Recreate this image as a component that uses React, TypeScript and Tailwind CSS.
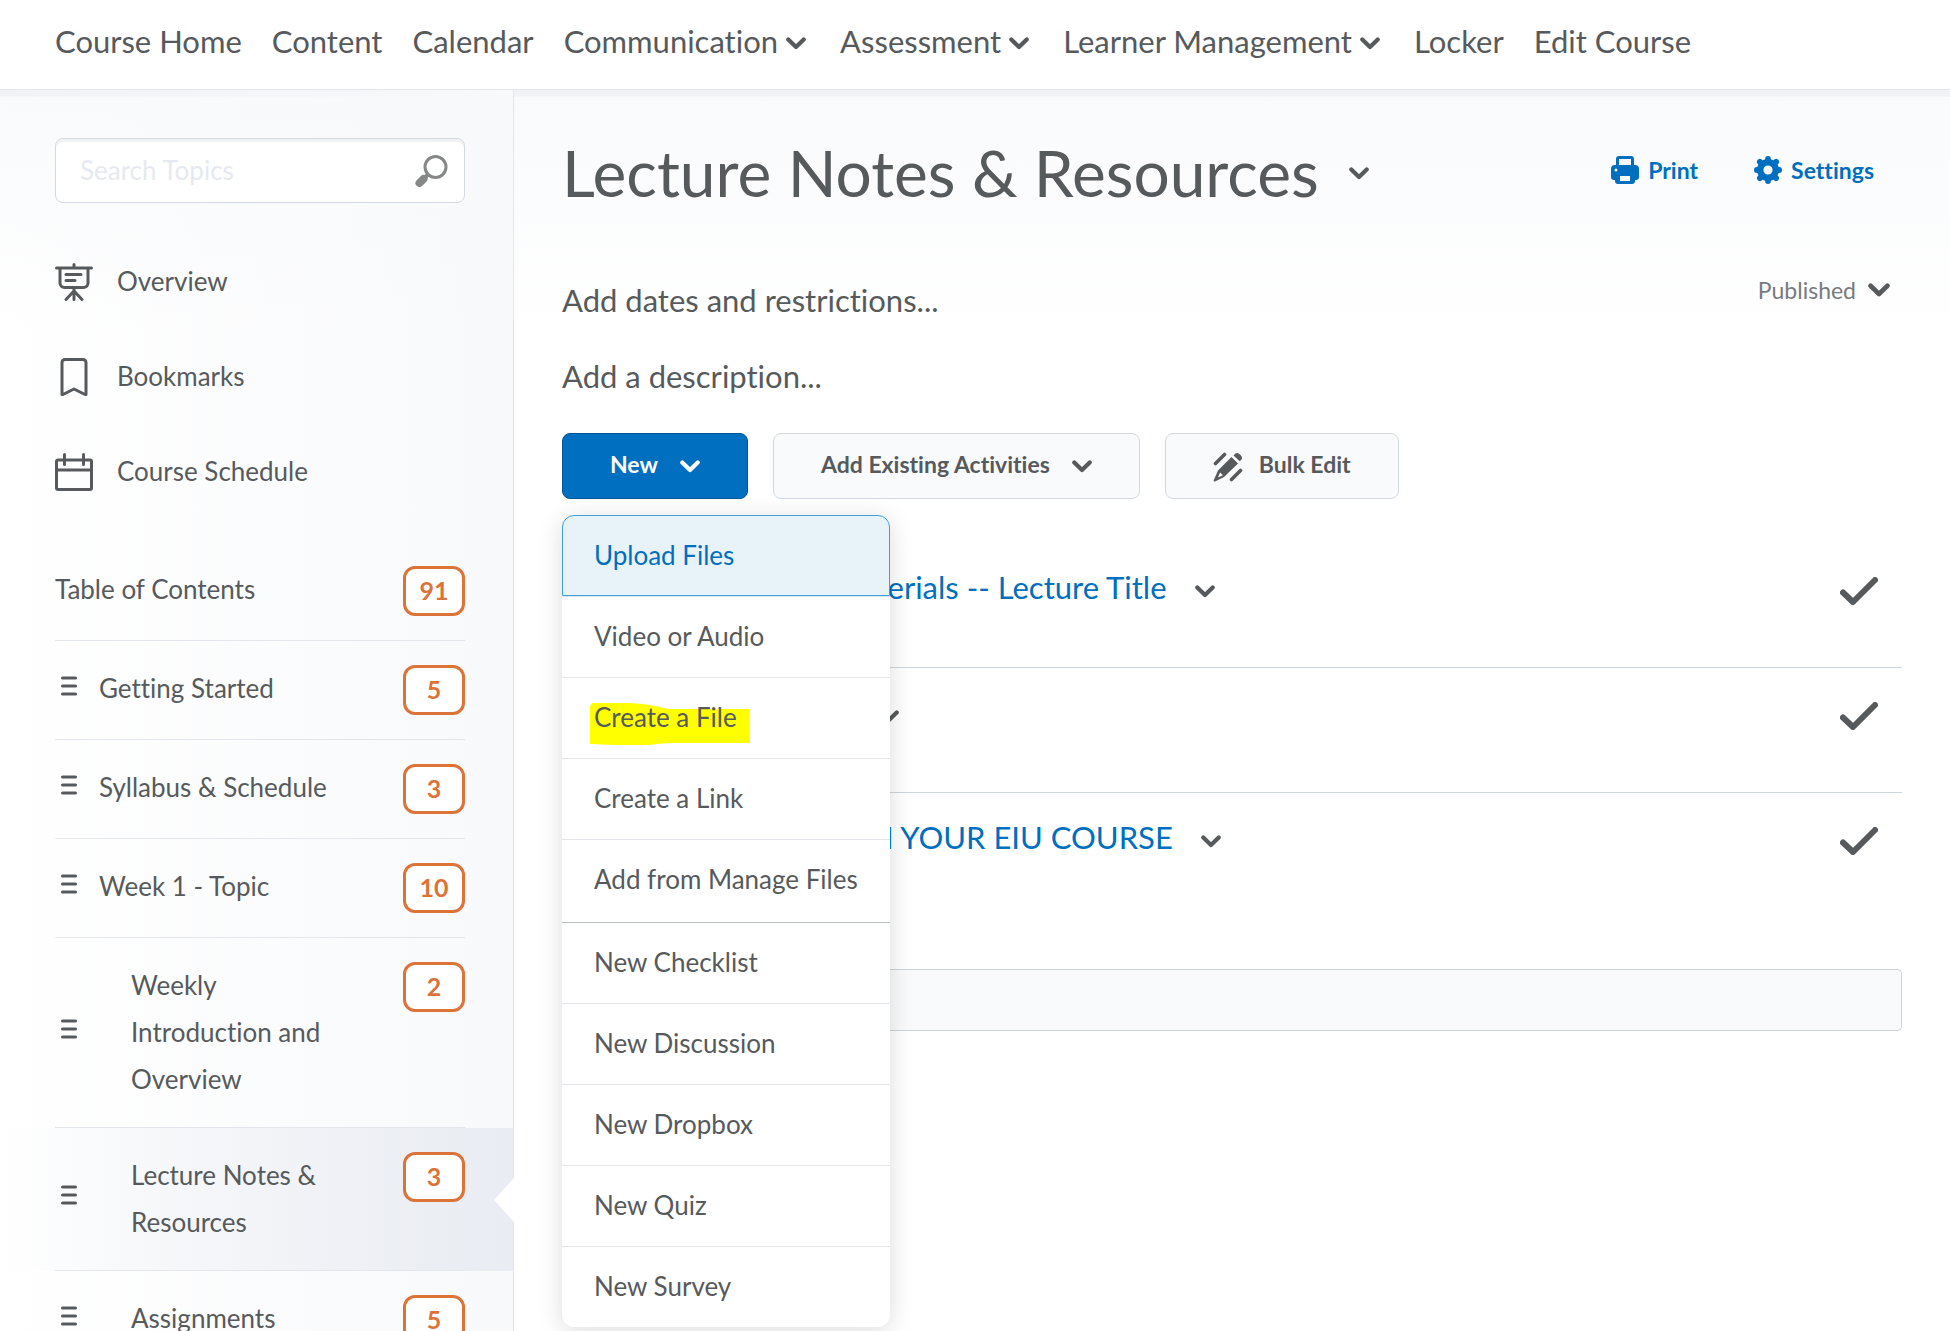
import React from 'react';

type IconProps = { className?: string };

const navItems = [
  { label: 'Course Home' },
  { label: 'Content' },
  { label: 'Calendar' },
  { label: 'Communication', menu: true },
  { label: 'Assessment', menu: true },
  { label: 'Learner Management', menu: true },
  { label: 'Locker' },
  { label: 'Edit Course' },
];

const modules = [
  { title: 'Getting Started', count: 5 },
  { title: 'Syllabus & Schedule', count: 3 },
  { title: 'Week 1 - Topic', count: 10 },
  { title: 'Weekly Introduction and Overview', count: 2, nested: true },
  { title: 'Lecture Notes & Resources', count: 3, nested: true, active: true },
  { title: 'Assignments', count: 5, nested: true },
];

const menuGroups = [
  ['Upload Files', 'Video or Audio', 'Create a File', 'Create a Link', 'Add from Manage Files'],
  ['New Checklist', 'New Discussion', 'New Dropbox', 'New Quiz', 'New Survey'],
];

const topics = [
  'Multimedia Lecture Materials -- Lecture Title',
  'Lecture Notes Packet',
  'TOPICS RESOURCES IN YOUR EIU COURSE',
];

const Chevron: React.FC<IconProps> = ({ className = 'w-5' }) => (
  <svg viewBox="0 0 20 13" className={`${className} shrink-0`} fill="none" stroke="currentColor" strokeWidth="4.2" strokeLinecap="round" strokeLinejoin="round" aria-hidden="true">
    <path d="M2.300 2.500l7.700 7.500 7.700-7.500" />
  </svg>
);

const OverviewIcon = () => (
  <svg viewBox="0 0 38 38" className="h-[38px] w-[38px]" fill="none" stroke="currentColor" strokeWidth="3" strokeLinecap="round" strokeLinejoin="round" aria-hidden="true">
    <path d="M1.500 5h35M19 1.500V5M5 5v15a4.500 4.500 0 0 0 4.500 4.500h19A4.500 4.500 0 0 0 33 20V5M11 11.500h15M11 17.500h9M19 24.500v12M19 28l-8 8.500M19 28l8 8.500" />
  </svg>
);

const BookmarkIcon = () => (
  <svg viewBox="0 0 38 38" className="h-[38px] w-[38px]" fill="none" stroke="currentColor" strokeWidth="3" strokeLinecap="round" strokeLinejoin="round" aria-hidden="true">
    <path d="M10 1.500h18a3 3 0 0 1 3 3V36.500h-1L19 31 8 36.500H7V4.500a3 3 0 0 1 3-3z" />
  </svg>
);

const CalendarIcon = () => (
  <svg viewBox="0 0 38 38" className="h-[38px] w-[38px]" fill="none" stroke="currentColor" strokeWidth="3" strokeLinecap="round" strokeLinejoin="round" aria-hidden="true">
    <rect x="1.500" y="7" width="35" height="29.500" rx="1.500" />
    <path d="M1.500 17h35M9.500 1.500v10M28.500 1.500v10" />
  </svg>
);

const SearchIcon = () => (
  <svg viewBox="0 0 34 34" className="h-[34px] w-[34px]" fill="none" stroke="currentColor" strokeLinecap="round" aria-hidden="true">
    <circle cx="21.500" cy="13" r="10.500" strokeWidth="3" />
    <path d="M9.500 25l-4 4" strokeWidth="8" />
    <path d="M13.500 21l-3 3" strokeWidth="4" />
  </svg>
);

const GripIcon = () => (
  <svg viewBox="0 0 16 20" className="h-5 w-4" stroke="currentColor" strokeWidth="3" strokeLinecap="round" aria-hidden="true">
    <path d="M1.500 2h13M1.500 10h13M1.500 18h13" />
  </svg>
);

const PrintIcon = () => (
  <svg viewBox="0 0 28 28" className="h-7 w-7" fill="currentColor" aria-hidden="true">
    <path fillRule="evenodd" d="M8 0h12a3 3 0 0 1 3 3v6h1a4 4 0 0 1 4 4v8a3 3 0 0 1-3 3h-1v1a3 3 0 0 1-3 3H7a3 3 0 0 1-3-3v-1H3a3 3 0 0 1-3-3v-8a4 4 0 0 1 4-4h1V3a3 3 0 0 1 3-3zm0 3v6h12V3zm1 17v5h10v-5zM5 12.500a1.500 1.500 0 1 0 0 3 1.500 1.500 0 0 0 0-3z" />
  </svg>
);

const GearIcon = () => (
  <svg viewBox="0 0 28 28" className="h-7 w-7" fill="none" stroke="currentColor" aria-hidden="true">
    <circle cx="14" cy="14" r="7.800" strokeWidth="6.400" />
    <g strokeWidth="5.800" strokeLinecap="round">
      <path d="M14 2.900v2M14 23.100v2M2.900 14h2M23.100 14h2M5.900 5.900l1.400 1.400M20.700 20.700l1.400 1.400M22.100 5.900l-1.400 1.400M7.300 20.700l-1.400 1.400" />
    </g>
  </svg>
);

const BulkEditIcon = () => (
  <svg viewBox="0 0 30 30" className="h-[30px] w-[30px]" fill="currentColor" aria-hidden="true">
    <path d="M21.500 2.500a3 3 0 0 1 3-1.500c2 .5 4 2.500 4.500 4.500a3 3 0 0 1-1.500 3l-1 .5-6-5.500z" />
    <path fillRule="evenodd" d="M18.500 5l6.500 6.500L11 25 2 29.500a1 1 0 0 1-1.300-1.300L5 18.500zM7 20.500l-2 5 5-2.200z" />
    <path d="M2.500 11.500l9-9M18.500 27.500l9-9" stroke="currentColor" strokeWidth="3.600" strokeLinecap="round" />
  </svg>
);

const CheckIcon = () => (
  <svg viewBox="0 0 38 28" className="h-7 w-[38px]" fill="none" stroke="currentColor" strokeWidth="6" strokeLinecap="round" strokeLinejoin="round" aria-hidden="true">
    <path d="M3 15.500l10 9.500L35 3" />
  </svg>
);

const CountBadge = ({ count }: { count: number }) => (
  <span className="flex h-[50px] w-[62px] shrink-0 items-center justify-center rounded-xl border-3 border-[#dc7339] bg-white pb-[2px] text-[25px] leading-none font-bold text-[#dc7339]">
    {count}
  </span>
);

const Header = () => (
  <header className="border-b border-[#e3e5ea] bg-white">
    <nav className="flex h-[89px] items-center gap-[30px] px-[55px] pb-2 text-[31px] leading-10">
      {navItems.map((item) =>
        item.menu ? (
          <button key={item.label} className="flex items-center gap-2 pr-1 whitespace-nowrap">
            {item.label}
            <Chevron className="mt-1.5 w-5" />
          </button>
        ) : (
          <a key={item.label} href="#" className="whitespace-nowrap">
            {item.label}
          </a>
        )
      )}
    </nav>
  </header>
);

const Sidebar = () => (
  <aside className="w-[514px] shrink-0 border-r border-[#e3e6ea] bg-linear-to-r from-transparent to-[#f8f9fb] pt-12 text-[26px] leading-[47px]">
    <div className="mr-12 ml-[55px] flex h-[65px] items-center rounded-lg border border-[#d3d9e3] bg-white pr-4 pl-6 shadow-[inset_0_3px_0_#f1f2f4]">
      <input
        type="text"
        aria-label="Search Topics"
        placeholder="Search Topics"
        className="min-w-0 flex-1 bg-transparent outline-none placeholder:text-[#e6eaf0]"
      />
      <button aria-label="Search" className="text-[#868888]">
        <SearchIcon />
      </button>
    </div>

    <nav className="mt-[31px] ml-[55px]">
      <a href="#" className="flex h-[95px] items-center gap-6">
        <OverviewIcon />
        Overview
      </a>
      <a href="#" className="flex h-[95px] items-center gap-6">
        <BookmarkIcon />
        Bookmarks
      </a>
      <a href="#" className="flex h-[95px] items-center gap-6">
        <CalendarIcon />
        Course Schedule
      </a>
    </nav>

    <a href="#" className="mt-[23px] mr-12 ml-[55px] flex items-start justify-between border-b border-[#e3e6ea] py-6">
      Table of Contents
      <CountBadge count={91} />
    </a>
    <ul>
      {modules.map((module) => (
        <li key={module.title} className={module.active ? 'relative bg-linear-to-r from-transparent to-[#e9ecf2]' : ''}>
          <a href="#" className="mr-12 ml-[55px] flex items-start border-b border-[#e3e6ea] py-6">
            <span className="flex w-11 shrink-0 items-center self-stretch pb-2 pl-1.5">
              <GripIcon />
            </span>
            <span className={module.nested ? 'w-[232px] pl-8' : ''}>{module.title}</span>
            <span className="ml-auto">
              <CountBadge count={module.count} />
            </span>
          </a>
          {module.active && (
            <svg viewBox="0 0 20 44" className="absolute top-1/2 -right-px h-11 w-5 -translate-y-1/2" fill="#ffffff" aria-hidden="true">
              <path d="M20 0v44L0 22z" />
            </svg>
          )}
        </li>
      ))}
    </ul>
  </aside>
);

const NewMenu = () => (
  <div className="absolute top-full left-0 z-10 mt-4 w-[328px] rounded-xl bg-white text-[26px] leading-10 font-normal shadow-[0_4px_24px_rgba(0,0,0,0.14)]">
    {menuGroups.map((group, groupIndex) => (
      <ul key={group[0]} className={groupIndex > 0 ? 'mt-0.5 border-t border-[#b9bfc7]' : ''}>
        {group.map((label, index) => (
          <li key={label} className={index > 0 ? 'border-t border-[#e3e6ea]' : ''}>
            {label === 'Upload Files' ? (
              <button className="block h-[81px] w-full rounded-t-xl border border-[#3f9fd8] bg-[#e8f2f9] px-[31px] pb-0.5 text-left text-[#006fbf]">
                {label}
              </button>
            ) : (
              <button className="relative block h-20 w-full px-8 pb-0.5 text-left whitespace-nowrap">
                {label === 'Create a File' && (
                  <svg viewBox="0 0 160 43" className="absolute top-6 left-7 h-[43px] w-40" fill="#ffff00" aria-hidden="true">
                    <path d="M0 5Q1 0 6 1L40 1Q60 2 78 7L160 7V41H85Q70 41 60 43H25L0 42z" />
                  </svg>
                )}
                <span className="relative">{label}</span>
              </button>
            )}
          </li>
        ))}
      </ul>
    ))}
  </div>
);

const App: React.FC = () => {
  return (
    <div className="flex h-screen flex-col overflow-hidden bg-white font-[Lato,sans-serif] text-[#565a5c] [font-variant-ligatures:none]">
      <Header />
      <div className="flex min-h-0 flex-1 bg-[linear-gradient(#f1f2f6_0,#f1f2f6_6px,#f9fafc_7px,#ffffff_240px)]">
        <Sidebar />
        <main className="min-w-0 flex-1 px-12">
          <div className="flex h-40 items-center justify-between pr-7">
            <div className="flex items-center gap-[30px] pt-1.5">
              <h1 className="text-[64px] leading-20">Lecture Notes & Resources</h1>
              <button aria-label="Module actions">
                <Chevron />
              </button>
            </div>
            <div className="flex items-center gap-14 text-[23px] font-bold text-[#006fbf]">
              <button className="flex items-center gap-[9px]">
                <PrintIcon />
                Print
              </button>
              <button className="flex items-center gap-[9px]">
                <GearIcon />
                Settings
              </button>
            </div>
          </div>

          <div className="flex items-start justify-between pr-3 text-[31px] leading-10">
            <div className="flex flex-col items-start gap-9 pt-[30px]">
              <button>Add dates and restrictions...</button>
              <button>Add a description...</button>
            </div>
            <button className="flex items-center gap-3 pt-5 text-[23px] leading-10 text-[#777b7e]">
              Published
              <Chevron className="w-[22px] text-[#565a5c]" />
            </button>
          </div>

          <div className="mt-[37px] flex gap-[25px] text-[23px] font-bold">
            <div className="relative">
              <button className="flex h-[66px] items-center gap-[22px] rounded-lg border border-[#005694] bg-[#006fbf] px-[47px] pb-1 text-white">
                New
                <Chevron className="mt-1 w-5" />
              </button>
              <NewMenu />
            </div>
            <button className="flex h-[66px] items-center gap-[22px] rounded-lg border border-[#d3d9e3] bg-[#f9fafb] px-[47px] pb-1">
              Add Existing Activities
              <Chevron className="mt-1 w-5" />
            </button>
            <button className="flex h-[66px] items-center gap-4 rounded-lg border border-[#d3d9e3] bg-[#f9fafb] px-[47px] pb-1">
              <span className="mt-1.5">
                <BulkEditIcon />
              </span>
              Bulk Edit
            </button>
          </div>

          <ul className="mt-11 text-[31px] leading-10">
            {topics.map((topic) => (
              <li key={topic} className="flex h-[125px] items-start justify-between border-b border-[#cdd5dc] pt-6 pr-6 last:border-b-0">
                <div className="flex items-center gap-7">
                  <a href="#" className="text-[#006fbf]">{topic}</a>
                  <button aria-label="Topic actions" className="pt-2">
                    <Chevron />
                  </button>
                </div>
                <span className="pt-2.5">
                  <CheckIcon />
                </span>
              </li>
            ))}
          </ul>
          <div className="mt-[51px] h-[62px] rounded-sm border border-[#cdd5dc] bg-[#f9fafb]" />
        </main>
      </div>
    </div>
  );
};

export default App;
